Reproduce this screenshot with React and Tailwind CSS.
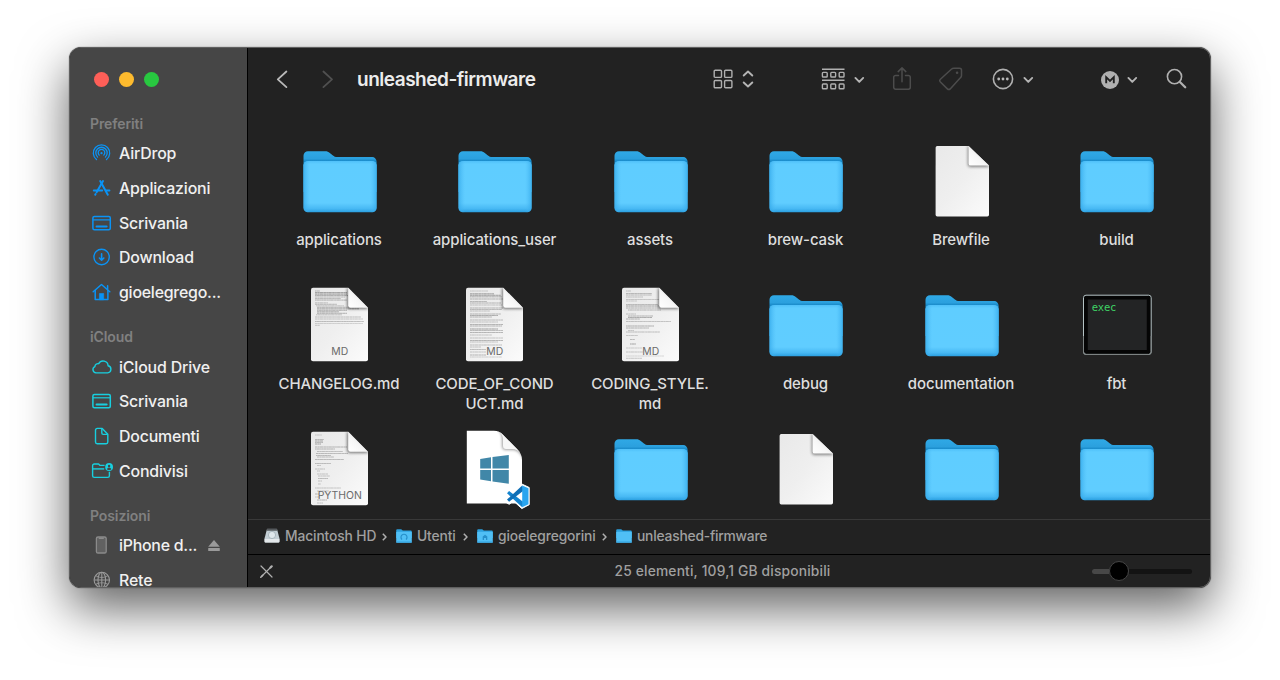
import React from "react";

/* ---------- sidebar icons ---------- */

const blue = "#0a93f5";
const cyan = "#18cfdf";

const AirDropIcon = () => (
  <svg className="w-[23px] h-5" viewBox="0 0 23 20" fill="none" stroke={blue} strokeWidth="1.3" strokeLinecap="round">
    <path d="M6.5 16.6a8.2 8.2 0 1 1 10 0" />
    <path d="M7.6 14.1a5.7 5.7 0 1 1 7.8 0" />
    <path d="M9.2 12.1a3.3 3.3 0 1 1 4.6 0" />
    <circle cx="11.5" cy="10.2" r="1.1" fill={blue} stroke="none" />
  </svg>
);

const AppsIcon = () => (
  <svg className="w-[23px] h-5" viewBox="0 0 23 20" fill="none" stroke={blue} strokeWidth="2" strokeLinecap="round">
    <path d="M13 3 6.6 14.2" />
    <path d="m10.2 3 7.6 13.7" />
    <path d="M3.8 12.6h8.4M16 12.6h3.4" />
    <path d="m5.6 16-.4.7" />
  </svg>
);

const DesktopIcon = ({ color }) => (
  <svg className="w-[23px] h-5" viewBox="0 0 23 20" fill="none" stroke={color} strokeWidth="1.5">
    <rect x="2.9" y="3.6" width="17.4" height="13.2" rx="1.5" />
    <path d="M3 6.8h17.2" strokeWidth="1.2" />
    <path d="M6.6 13.5h10" strokeWidth="2.1" strokeLinecap="round" />
  </svg>
);

const DownloadIcon = () => (
  <svg className="w-[23px] h-5" viewBox="0 0 23 20" fill="none" stroke={blue} strokeWidth="1.4" strokeLinecap="round" strokeLinejoin="round">
    <circle cx="11.6" cy="10" r="7.7" />
    <path d="M11.6 6.8v6.2M9.4 11l2.2 2.2 2.2-2.2" strokeWidth="1.6" />
  </svg>
);

const HomeIcon = () => (
  <svg className="w-[23px] h-5" viewBox="0 0 23 20" fill="none" stroke={blue} strokeWidth="1.5" strokeLinecap="round" strokeLinejoin="round">
    <path d="m3.2 9.8 8.3-7.3 8.3 7.3" />
    <path d="M5.2 8.6v8.9h12.7V8.6M17.6 7.2V3.8" />
    <path d="M9.4 17.4v-5.9h4.3v5.9z" fill={blue} strokeWidth=".6" />
  </svg>
);

const CloudIcon = () => (
  <svg className="w-[23px] h-5" viewBox="0 0 23 20" fill="none" stroke={cyan} strokeWidth="1.4" strokeLinejoin="round">
    <path d="M6 15.9h11.6a3.6 3.6 0 0 0 .5-7.1A5 5 0 0 0 8.7 6.7a3 3 0 0 0-3.8 2.9A3.3 3.3 0 0 0 6 15.9z" />
  </svg>
);

const DocumentIcon = () => (
  <svg className="w-[23px] h-5" viewBox="0 0 23 20" fill="none" stroke={cyan} strokeWidth="1.4" strokeLinejoin="round">
    <path d="M7.2 2.4h5l5.6 5.8v7.8a1.7 1.7 0 0 1-1.7 1.7H7.2A1.7 1.7 0 0 1 5.5 16V4.1a1.7 1.7 0 0 1 1.7-1.7z" />
    <path d="M11.8 2.6v4.5a1.3 1.3 0 0 0 1.3 1.3h4.5" />
  </svg>
);

const SharedIcon = () => (
  <svg className="w-[23px] h-5" viewBox="0 0 23 20" fill="none" stroke={cyan} strokeWidth="1.4" strokeLinejoin="round">
    <path d="M14.6 4.4H10L8.6 3H4.3a1.7 1.7 0 0 0-1.7 1.7v10a1.7 1.7 0 0 0 1.7 1.7h13.4a1.7 1.7 0 0 0 1.7-1.7v-4" />
    <path d="M2.8 7.9h11.4" />
    <circle cx="19.1" cy="6" r="3.9" fill={cyan} stroke="none" />
    <circle cx="19.1" cy="4.9" r="1.2" fill="#464646" stroke="none" />
    <path d="M16.9 8.2c.4-1.1 1.3-1.6 2.2-1.6s1.8.5 2.2 1.6c-.6.6-1.3.9-2.2.9s-1.6-.3-2.2-.9z" fill="#464646" stroke="none" />
  </svg>
);

const PhoneIcon = () => (
  <svg className="w-[23px] h-5" viewBox="0 0 23 20">
    <rect x="6.4" y="2" width="9.8" height="16" rx="1.6" fill="#616161" stroke="#8b8b8b" strokeWidth="1.3" />
    <path d="M9.3 3.2h4" stroke="#8b8b8b" strokeWidth="1.4" strokeLinecap="round" />
  </svg>
);

const GlobeIcon = () => (
  <svg className="w-[23px] h-5" viewBox="0 0 23 20" fill="none" stroke="#9a9a9a" strokeWidth="1.1">
    <circle cx="11.8" cy="10" r="7.7" />
    <ellipse cx="11.8" cy="10" rx="3.8" ry="7.7" />
    <path d="M11.8 2.3v15.4M4.1 10h15.4M5.6 5.6c3.6 2.3 8.8 2.3 12.4 0M5.6 14.4c3.6-2.3 8.8-2.3 12.4 0" />
  </svg>
);

const EjectIcon = () => (
  <svg className="w-3 h-[13px]" viewBox="0 0 12 13" fill="#9a9a9a">
    <path d="M6 .9 11.8 7.8H.2z" />
    <rect x=".2" y="8.9" width="11.6" height="3" rx=".5" />
  </svg>
);

/* ---------- file icons ---------- */

const FileDefs = () => (
  <svg className="absolute w-0 h-0" aria-hidden="true">
    <defs>
      <linearGradient id="folderBack" x1="0" y1="0" x2="0" y2="1">
        <stop offset="0" stopColor="#2fa9e6" />
        <stop offset=".18" stopColor="#2ba0de" />
        <stop offset=".24" stopColor="#1889c8" />
        <stop offset="1" stopColor="#1b95d6" />
      </linearGradient>
      <linearGradient id="folderFront" x1="0" y1="0" x2="0" y2="1">
        <stop offset="0" stopColor="#4fc0f9" />
        <stop offset=".06" stopColor="#5fcdff" />
        <stop offset=".82" stopColor="#60cdff" />
        <stop offset=".93" stopColor="#48b9f4" />
        <stop offset="1" stopColor="#2a9fe0" />
      </linearGradient>
      <linearGradient id="folderSides" x1="0" y1="0" x2="1" y2="0">
        <stop offset="0" stopColor="#2fa6e8" stopOpacity=".7" />
        <stop offset=".09" stopColor="#4bb9f5" stopOpacity="0" />
        <stop offset=".91" stopColor="#4bb9f5" stopOpacity="0" />
        <stop offset="1" stopColor="#2fa6e8" stopOpacity=".7" />
      </linearGradient>
      <linearGradient id="paper" x1="0" y1="0" x2="1" y2="1">
        <stop offset="0" stopColor="#e8e8e8" />
        <stop offset=".5" stopColor="#efefef" />
        <stop offset="1" stopColor="#fcfcfc" />
      </linearGradient>
      <linearGradient id="curl" x1="0" y1="1" x2=".7" y2=".3">
        <stop offset="0" stopColor="#ffffff" />
        <stop offset=".6" stopColor="#f6f6f6" />
        <stop offset="1" stopColor="#e0e0e0" />
      </linearGradient>
      <filter id="soft" x="-30%" y="-30%" width="160%" height="160%">
        <feGaussianBlur stdDeviation="1.4" />
      </filter>
    </defs>
  </svg>
);

const Folder = () => (
  <svg className="w-20 h-[78px]" viewBox="0 0 80 78">
    <path d="M3.5 13.8a4.5 4.5 0 0 1 4.5-4.5h17.2c2 0 3.2.5 4.6 1.6l2.8 2.3c1.500 1.2 2.8 1.9 4.8 1.9h34.8a4.4 4.4 0 0 1 4.4 4.4V50H3.5z" fill="url(#folderBack)" />
    <rect x="3.5" y="19" width="73.1" height="51.2" rx="4.4" fill="url(#folderFront)" />
    <rect x="3.5" y="19" width="73.1" height="51.2" rx="4.4" fill="url(#folderSides)" />
  </svg>
);

const BlankDoc = () => (
  <svg className="w-20 h-[78px]" viewBox="0 0 80 78">
    <clipPath id="blankClip"><path d="M15.3 4h31.3L67 23.6v49.2a1.7 1.7 0 0 1-1.7 1.7h-50a1.7 1.7 0 0 1-1.7-1.7V5.7a1.7 1.7 0 0 1 1.7-1.7z" /></clipPath>
    <g clipPath="url(#blankClip)">
      <path d="M10 0h60v78H10z" fill="url(#paper)" />
      <path d="M45.8 3v19a3 3 0 0 0 3 3H68z" fill="#000" opacity=".45" filter="url(#soft)" />
    </g>
    <path d="M46.6 4v17.4a2.2 2.2 0 0 0 2.2 2.2H67z" fill="url(#curl)" />
  </svg>
);

/* Each row: y offset, start x, line length, darkness */
const changelogLines = [
  [5, 15, 5, 0.4], [6.6, 15, 32, 0.6], [8.1, 15, 32, 0.6], [9.6, 15, 33, 0.5], [11.1, 15, 30, 0.3], [12.6, 15, 26, 0.4], [14.1, 15, 32, 0.4],
  [16.8, 15, 13, 0.3], [18.3, 15, 22, 0.4], [19.8, 16, 28, 0.3], [21.3, 17, 46, 0.45], [22.8, 17, 42, 0.5], [24.3, 17, 30, 0.45], [25.8, 17, 22, 0.5],
  [27.3, 17, 30, 0.45], [28.8, 16, 26, 0.35], [31, 15, 46, 0.35], [33, 15, 48, 0.3], [35.5, 15, 49, 0.4], [37.5, 15, 48, 0.25], [39.3, 15, 5, 0.3],
];
const conductLines = [
  [5, 15, 18, 0.25], [7.8, 15, 24, 0.55], [9.3, 15, 31, 0.55], [10.8, 15, 32, 0.45], [13, 15, 33, 0.4], [15.5, 15, 17, 0.4], [17, 15, 31, 0.4], [19, 15, 32, 0.3],
  [22, 15, 33, 0.4], [23.5, 15, 32, 0.4], [25, 15, 20, 0.3], [28, 15, 31, 0.4], [29.5, 15, 28, 0.5], [31, 15, 22, 0.4], [34, 15, 33, 0.35], [36, 15, 28, 0.3],
  [38.5, 15, 33, 0.45], [40, 15, 32, 0.4], [43, 15, 28, 0.55], [44.5, 15, 33, 0.4], [46.5, 15, 33, 0.45], [49, 15, 22, 0.3], [52, 15, 33, 0.3], [54.5, 15, 33, 0.45],
  [56, 15, 28, 0.3], [59, 15, 32, 0.35], [61, 15, 11, 0.3], [63.5, 15, 16, 0.4], [66, 15, 16, 0.3], [69, 15, 16, 0.4], [71, 15, 32, 0.25],
];
const codingLines = [
  [5, 15, 5, 0.3], [7.5, 15, 26, 0.4], [9, 15, 26, 0.35], [11, 15, 17, 0.3], [13.5, 15, 33, 0.3], [15, 15, 11, 0.25], [18.5, 15, 32, 0.4], [20, 15, 35, 0.5],
  [22, 15, 35, 0.4], [24, 17, 33, 0.4], [28, 15, 10, 0.3], [30, 17, 25, 0.4], [31.5, 17, 24, 0.5], [33, 15, 14, 0.4], [35.5, 15, 45, 0.35], [40, 15, 28, 0.45],
  [42, 15, 23, 0.4], [44.5, 17, 6, 0.3], [46, 15, 34, 0.35], [49.5, 15, 12, 0.3], [53.5, 19, 5, 0.4], [58, 19, 6, 0.5], [62, 15, 16, 0.25], [66, 15, 17, 0.3], [70, 15, 38, 0.2], [72.3, 15, 16, 0.3],
];
const pythonLines = [
  [5, 15, 7, 0.25], [9.5, 15, 9, 0.4], [11, 15, 8, 0.5], [12.5, 15, 8, 0.4], [14, 15, 6, 0.5], [17, 15, 32, 0.4], [19, 15, 20, 0.4], [21.5, 17, 26, 0.35], [23.5, 16, 32, 0.4],
  [25.5, 16, 15, 0.4], [27, 17, 17, 0.35], [29.5, 15, 29, 0.4], [33.5, 15, 16, 0.4], [35.5, 17, 4, 0.3], [39, 15, 10, 0.3], [41, 17, 3, 0.3], [44, 17, 11, 0.3], [46, 18, 12, 0.3],
  [48.5, 18, 10, 0.4], [51, 18, 4, 0.3], [54, 18, 3, 0.3], [58, 15, 26, 0.3], [61, 17, 12, 0.3], [64, 15, 4, 0.4], [67, 15, 5, 0.3], [70, 17, 10, 0.4], [73, 17, 6, 0.3],
];

const TextDoc = ({ lines, kind, id }) => (
  <svg className="w-20 h-[78px]" viewBox="0 0 80 78">
    <clipPath id={id}><path d="M13 1.8h35.2L68 21.7v51.5a2 2 0 0 1-2 2H13a2 2 0 0 1-2-2V3.8a2 2 0 0 1 2-2z" /></clipPath>
    <g clipPath={`url(#${id})`}>
      <path d="M8 0h62v78H8z" fill="url(#paper)" />
      {lines.map(([y, x, w, o], i) => (
        <g key={i} stroke="#444" strokeWidth=".85" opacity={o}>
          <path d={`M${x} ${y}h${w}`} opacity=".6" />
          <path d={`M${x} ${y}h${w}`} strokeDasharray={i % 3 ? "2.2 .7 1.3 .6 3.1 .8" : "1.3 .6 2.7 .7 .9 .5"} opacity=".6" />
        </g>
      ))}
      <path d="M47 1v19a3 3 0 0 0 3 3h19z" fill="#000" opacity=".5" filter="url(#soft)" />
    </g>
    <path d="M48.2 1.8v17.7a2.2 2.2 0 0 0 2.2 2.2H68z" fill="url(#curl)" />
    <text x="39.7" y="69" textAnchor="middle" fontSize="10.4" fontFamily="Inter, sans-serif" fill="#6a6a6a">{kind}</text>
  </svg>
);

const WindowsDoc = () => (
  <svg className="w-20 h-[78px] overflow-visible" viewBox="0 0 80 78">
    <clipPath id="winClip"><path d="M11.8.8h27c4 0 6.5 1.3 9.2 4l14.5 14.7c3 3 4.5 6.5 4.5 10.5v43.5H11.8z" /></clipPath>
    <g clipPath="url(#winClip)">
      <path d="M10 0h60v76H10z" fill="#fff" />
      <path d="M43 0c3 2 4.2 5 4.2 9v7.3c0 2.5 1 3.5 3.5 3.5h6c5 0 9 2 11 9V0z" fill="#000" opacity=".42" filter="url(#soft)" />
    </g>
    <path d="M41 1c5 1.3 7 4.5 7 9.3v5.5c0 2.2.9 3.2 3 3.2h6c3.5 0 6.3 1.2 8.5 4.5-.9-1.5-1.8-2.7-3-4L48 4.8C45.8 2.6 43.7 1.3 41 1z" fill="#f7f7f7" />
    <path d="M25.2 29 36 27.3v11.2H25.2zM37.5 27 53.8 24.9v13.6H37.5zM25.2 40H36v11.3L25.2 49.6zM37.5 40h16.3v13.7l-16.3-2.2z" fill="#4187a8" />
    <path d="M66.8 54 74.2 57.5v17.2L66.8 78.6 58.5 71l-4.3 3.3-3.4-2 3.3-6-3.3-6 3.4-2.1 4.3 3.3z" fill="#fff" stroke="#fff" strokeWidth="1" strokeLinejoin="round" />
    <path d="M67.2 77.3 52 63.3l2.1-2.2L69 72.5z" fill="#1484cf" />
    <path d="M67.2 55.5 52 69.6l2.1 2.2L69 60.3z" fill="#0f6fb6" />
    <path d="m67.2 55.5 6.3 2.8v16l-6.3 3z" fill="#2aa5ef" />
  </svg>
);

const ExecIcon = () => (
  <svg className="w-20 h-[78px]" viewBox="0 0 80 78">
    <rect x="6.500" y="9.200" width="67.700" height="59.200" rx="2.500" fill="#050505" stroke="#b5c3c5" strokeWidth="1" />
    <path d="M6.500 50v16a2.500 2.500 0 0 0 2.500 2.500h62.700a2.500 2.500 0 0 0 2.500-2.500V50" fill="none" stroke="#7d8383" strokeWidth="1" />
    <rect x="10.800" y="13.500" width="59" height="50.500" fill="#232425" />
    <text x="14.800" y="24.800" fontSize="10.500" textLength="24.500" fontFamily="'DejaVu Sans Mono', monospace" fill="#3fd365">exec</text>
  </svg>
);

/* ---------- toolbar ---------- */

const Chevron = ({ className }) => (
  <svg className={`w-[11px] h-2 shrink-0 ${className}`} viewBox="0 0 11 8" fill="none" stroke="#b4b4b4" strokeWidth="1.9" strokeLinecap="round" strokeLinejoin="round">
    <path d="m1.4 1.9 3.9 4 3.9-4" />
  </svg>
);

const Toolbar = () => (
  <div className="flex h-[62px] items-center shrink-0 pl-[28px]">
    <svg className="w-3 h-[19px]" viewBox="0 0 12 19" fill="none" stroke="#b9b9b9" strokeWidth="1.8" strokeLinecap="round" strokeLinejoin="round"><path d="m10.4 1.5-8.6 7.8 8.6 7.8" /></svg>
    <svg className="w-3 h-[19px] ml-[34px]" viewBox="0 0 12 19" fill="none" stroke="#505050" strokeWidth="1.8" strokeLinecap="round" strokeLinejoin="round"><path d="m1.4 1.5 8.6 7.8-8.6 7.8" /></svg>
    <h1 className="ml-[23px] mt-0.5 w-[356px] text-[19px] leading-6 font-semibold tracking-[-0.48px] text-[#ececec] whitespace-nowrap">unleashed-firmware</h1>
    <svg className="w-5 h-5" viewBox="0 0 20 20" fill="none" stroke="#b0b0b0" strokeWidth="1.4">
      <rect x="1.2" y="1.2" width="7.3" height="7.2" rx="1" /><rect x="11.6" y="1.2" width="7.3" height="7.2" rx="1" />
      <rect x="1.2" y="11.5" width="7.3" height="7.2" rx="1" /><rect x="11.6" y="11.5" width="7.3" height="7.2" rx="1" />
    </svg>
    <svg className="w-3 h-[18px] ml-[9px]" viewBox="0 0 12 18" fill="none" stroke="#b4b4b4" strokeWidth="1.9" strokeLinecap="round" strokeLinejoin="round"><path d="m1.7 5.5 4.3-4 4.3 4M1.7 12.5l4.3 4 4.3-4" /></svg>
    <svg className="w-6 h-[23px] ml-[67px]" viewBox="0 0 24 23" fill="none" stroke="#b0b0b0" strokeWidth="1.4">
      <path d="M1 1.3h22.5M1 12.3h22.5" />
      <rect x="1.4" y="4.4" width="4.8" height="4.6" rx=".8" /><rect x="9.8" y="4.4" width="4.8" height="4.6" rx=".8" /><rect x="18.2" y="4.4" width="4.8" height="4.6" rx=".8" />
      <rect x="1.4" y="16" width="4.8" height="4.8" rx=".8" /><rect x="9.8" y="16" width="4.8" height="4.8" rx=".8" /><rect x="18.2" y="16" width="4.8" height="4.8" rx=".8" />
    </svg>
    <Chevron className="ml-[9px] mt-px" />
    <svg className="w-5 h-6 ml-[27px]" viewBox="0 0 20 24" fill="none" stroke="#4c4c4c" strokeWidth="1.5" strokeLinecap="round" strokeLinejoin="round">
      <path d="M6.5 8.5H3.6A1.9 1.9 0 0 0 1.7 10.4v9.9a1.9 1.9 0 0 0 1.9 1.9h12.8a1.9 1.9 0 0 0 1.9-1.9v-9.9A1.9 1.9 0 0 0 16.4 8.5h-2.9" />
      <path d="M10 14.8V1M6.2 4.6 10 .9l3.8 3.7" />
    </svg>
    <svg className="w-[26px] h-6 ml-[26px]" viewBox="0 0 26 24" fill="none" stroke="#4c4c4c" strokeWidth="1.5" strokeLinejoin="round">
      <path d="M15.8 1.2h5.7a2 2 0 0 1 2 2v5.3c0 .9-.3 1.5-.9 2.1L12.2 21.9c-.9.9-1.9.9-2.8 0l-7-6.9c-.9-.9-.9-1.9 0-2.8L13.6 2c.6-.6 1.3-.8 2.2-.8z" />
      <circle cx="19.1" cy="5.8" r="1.3" fill="#4c4c4c" stroke="none" />
    </svg>
    <svg className="w-[22px] h-[22px] ml-[28px]" viewBox="0 0 22 22">
      <circle cx="11" cy="11" r="9.6" fill="none" stroke="#b0b0b0" strokeWidth="1.6" />
      <g fill="#b8b8b8"><circle cx="6.7" cy="11" r="1.4" /><circle cx="11" cy="11" r="1.4" /><circle cx="15.3" cy="11" r="1.4" /></g>
    </svg>
    <Chevron className="ml-[9px] mt-px" />
    <svg className="w-[18px] h-[18px] ml-[67px] mt-px" viewBox="0 0 18 18">
      <circle cx="9" cy="9" r="9" fill="#b0b0b0" />
      <path d="M5.2 12.2V6.2L9 10l3.8-3.8v6" fill="none" stroke="#222" strokeWidth="1.9" />
    </svg>
    <Chevron className="ml-2 mt-px" />
    <svg className="w-[22px] h-[22px] ml-[28px]" viewBox="0 0 22 22" fill="none" stroke="#b0b0b0" strokeLinecap="round">
      <circle cx="8.5" cy="8.6" r="7.1" strokeWidth="1.6" /><path d="m13.900 14 5.300 5.300" strokeWidth="2.3" />
    </svg>
  </div>
);

/* ---------- sidebar ---------- */

const SideItem = ({ icon, children, tracking = "tracking-[-0.17px]", tail }) => (
  <li className="flex h-[34.75px] items-center">
    {icon}
    <span className={`ml-1.5 pt-px text-[15.9px] leading-[15px] font-medium text-[#f0f0f0] whitespace-nowrap ${tracking}`}>{children}</span>
    {tail && <span className="ml-[11px]">{tail}</span>}
  </li>
);

const SideSection = ({ title, children }) => (
  <section>
    <h2 className="mt-[17px] h-[22.7px] text-sm leading-[22px] font-semibold tracking-[-0.1px] text-[#808080]">{title}</h2>
    <ul>{children}</ul>
  </section>
);

const Sidebar = () => (
  <aside className="flex w-[178px] shrink-0 flex-col overflow-hidden border-r border-black bg-[#464646] pl-5">
    <div className="mt-[23px] mb-[9px] ml-[4px] flex h-[16px] shrink-0 items-center gap-[9.8px]">
      <span className="size-[15px] rounded-full bg-[#fe5f58]" />
      <span className="size-[15px] rounded-full bg-[#febb2e]" />
      <span className="size-[15px] rounded-full bg-[#28c840]" />
    </div>
    <SideSection title="Preferiti">
      <SideItem icon={<AirDropIcon />}>AirDrop</SideItem>
      <SideItem icon={<AppsIcon />}>Applicazioni</SideItem>
      <SideItem icon={<DesktopIcon color={blue} />}>Scrivania</SideItem>
      <SideItem icon={<DownloadIcon />}>Download</SideItem>
      <SideItem icon={<HomeIcon />} tracking="tracking-[-0.23px]">gioelegrego...</SideItem>
    </SideSection>
    <SideSection title="iCloud">
      <SideItem icon={<CloudIcon />}>iCloud Drive</SideItem>
      <SideItem icon={<DesktopIcon color={cyan} />}>Scrivania</SideItem>
      <SideItem icon={<DocumentIcon />}>Documenti</SideItem>
      <SideItem icon={<SharedIcon />}>Condivisi</SideItem>
    </SideSection>
    <SideSection title="Posizioni">
      <SideItem icon={<PhoneIcon />} tracking="tracking-[-0.25px]" tail={<EjectIcon />}>iPhone d...</SideItem>
      <SideItem icon={<GlobeIcon />}>Rete</SideItem>
    </SideSection>
  </aside>
);

/* ---------- file grid ---------- */

const files = [
  { icon: <Folder />, name: ["applications"] },
  { icon: <Folder />, name: ["applications_user"] },
  { icon: <Folder />, name: ["assets"] },
  { icon: <Folder />, name: ["brew-cask"] },
  { icon: <BlankDoc />, name: ["Brewfile"] },
  { icon: <Folder />, name: ["build"] },
  { icon: <TextDoc id="docChangelog" lines={changelogLines} kind="MD" />, name: ["CHANGELOG.md"] },
  { icon: <TextDoc id="docConduct" lines={conductLines} kind="MD" />, name: ["CODE_OF_COND", "UCT.md"] },
  { icon: <TextDoc id="docCoding" lines={codingLines} kind="MD" />, name: ["CODING_STYLE.", "md"] },
  { icon: <Folder />, name: ["debug"] },
  { icon: <Folder />, name: ["documentation"] },
  { icon: <ExecIcon />, name: ["fbt"] },
  { icon: <TextDoc id="docPython" lines={pythonLines} kind="PYTHON" />, name: [] },
  { icon: <WindowsDoc />, name: [] },
  { icon: <Folder />, name: [] },
  { icon: <BlankDoc />, name: [] },
  { icon: <Folder />, name: [] },
  { icon: <Folder />, name: [] },
];

const FileGrid = () => (
  <div className="min-h-0 flex-1 overflow-hidden pt-[32px] pl-[14px]">
    <div className="grid grid-cols-[repeat(6,155.5px)] auto-rows-[144px]">
      {files.map((f, i) => (
        <div key={i} className="flex flex-col items-center">
          {f.icon}
          <div className="mt-[9.5px] pr-[1.5px] text-center text-[15px] leading-5 font-medium tracking-[-0.12px] text-[#dedede]">
            {f.name.map((line) => <div key={line} className="whitespace-nowrap">{line}</div>)}
          </div>
        </div>
      ))}
    </div>
  </div>
);

/* ---------- path and status bars ---------- */

const DriveIcon = () => (
  <svg className="w-4 h-4" viewBox="0 0 16 16">
    <path d="M3 1h10l2.5 9.5v3a1 1 0 0 1-1 1h-13a1 1 0 0 1-1-1v-3z" fill="#c3ced4" />
    <path d="M3.2.6h9.6l.4 2.2H2.8z" fill="#55595c" />
    <circle cx="8" cy="7" r="3.6" fill="#dfe7eb" stroke="#98a6ae" strokeWidth=".7" />
    <path d="M.6 11h14.8v2.6a.9.9 0 0 1-.9.9h-13a.9.9 0 0 1-.9-.9z" fill="#e3e7ea" />
  </svg>
);

const MiniFolder = ({ children }) => (
  <svg className="w-4 h-4" viewBox="0 0 16 16">
    <path d="M.2 2.2A1 1 0 0 1 1.2 1.2h4L6.8 2.500h8a1 1 0 0 1 1 1V10H.2z" fill="#2b9fdc" />
    <rect x=".2" y="3.7" width="15.6" height="11.1" rx=".9" fill="#50bff5" />
    <path d="M.4 14h15.2" stroke="#36a6e2" strokeWidth="1.2" />
    {children}
  </svg>
);

const Separator = () => (
  <svg className="ml-[6px] mr-[9px] mt-0.5 w-[5px] h-2" viewBox="0 0 5 8" fill="none" stroke="#b0b0b0" strokeWidth="1.5" strokeLinejoin="round"><path d="m.8.8 3.2 3.2-3.2 3.2" /></svg>
);

const PathBar = () => (
  <nav className="flex h-[35px] shrink-0 items-center border-t border-[#393939] pl-[16px] pb-[2px] text-[13.8px] leading-5 font-medium tracking-[-0.12px] text-[#a0a0a0] whitespace-nowrap">
    <DriveIcon /><span className="ml-[5px] w-[91px]">Macintosh HD</span><Separator />
    <MiniFolder><path d="M6 11.5a3 3 0 1 1 4 0" fill="none" stroke="#268fca" strokeWidth="1.2" /></MiniFolder>
    <span className="ml-[5px] w-[40px]">Utenti</span><Separator />
    <MiniFolder><path d="M5.7 12V8.5L8 6.7l2.3 1.8V12H9v-2H7v2z" fill="#268fca" /></MiniFolder>
    <span className="ml-[5px] w-[98px]">gioelegregorini</span><Separator />
    <MiniFolder />
    <span className="ml-[5px] tracking-[-0.2px]">unleashed-firmware</span>
  </nav>
);

const StatusBar = () => (
  <footer className="flex h-[33px] shrink-0 items-center border-t border-black pl-[12px] pr-[18px]">
    <svg className="w-[13px] h-[13px]" viewBox="0 0 13 13" fill="none" stroke="#b0b0b0" strokeWidth="1.2" strokeLinecap="round">
      <path d="m1 1 11 11" /><path d="M11 2 2 11" /><path d="m10.5 2.5 1.2-1.2" strokeWidth="2.2" /><path d="m2.6 10.4-1.8 1.8" strokeWidth="1.6" />
    </svg>
    <p className="flex-1 pl-[80px] text-center text-[13.8px] leading-5 font-medium tracking-[0.17px] text-[#a0a0a0]">25 elementi, 109,1 GB disponibili</p>
    <div className="flex w-[100px] items-center">
      <span className="h-[5px] w-[17px] rounded-l-full bg-[#484848]" />
      <span className="size-[20px] shrink-0 rounded-full border border-[#454545] bg-black" />
      <span className="h-[5px] flex-1 rounded-r-full bg-[#131313]" />
    </div>
  </footer>
);

export default function App() {
  return (
    <div className="flex h-[680px] w-[1280px] overflow-hidden bg-white pt-[47px] pl-[69px] font-['Inter',sans-serif]">
      <FileDefs />
      <div className="flex h-[541px] w-[1142px] overflow-hidden rounded-xl border border-[#606060] bg-[#222222] shadow-[0_20px_50px_rgba(0,0,0,0.62),0_0_1px_rgba(0,0,0,0.8)]">
        <Sidebar />
        <main className="flex min-w-0 flex-1 flex-col">
          <Toolbar />
          <FileGrid />
          <PathBar />
          <StatusBar />
        </main>
      </div>
    </div>
  );
}
